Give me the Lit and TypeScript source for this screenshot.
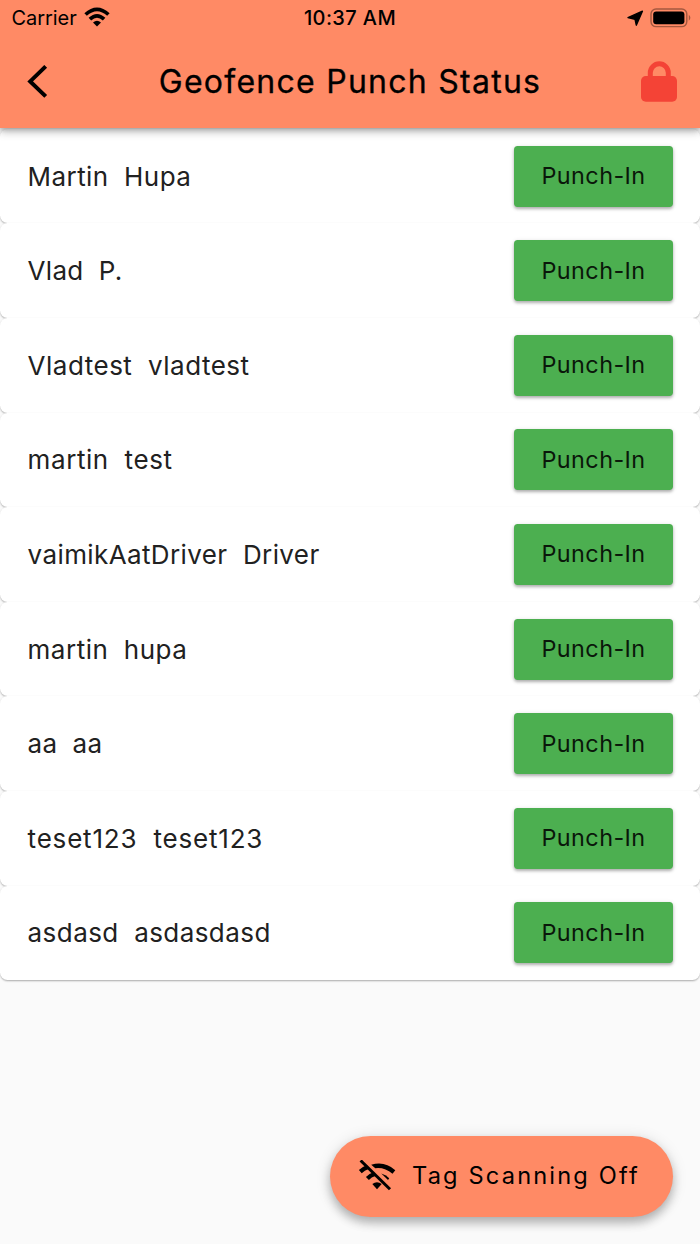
import { LitElement, html, css } from "lit";
import { customElement, property } from "lit/decorators.js";

interface Person {
  name: string;
  tracking: number;
}

const PEOPLE: Person[] = [
  { name: "Martin  Hupa", tracking: 0.43 },
  { name: "Vlad  P.", tracking: 0.3 },
  { name: "Vladtest  vladtest", tracking: 0.5 },
  { name: "martin  test", tracking: 0.58 },
  { name: "vaimikAatDriver  Driver", tracking: 0.39 },
  { name: "martin  hupa", tracking: 0.49 },
  { name: "aa  aa", tracking: 0.3 },
  { name: "teset123  teset123", tracking: 0.8 },
  { name: "asdasd  asdasdasd", tracking: 0.43 },
];

@customElement("punch-row")
class PunchRow extends LitElement {
  @property() name = "";
  @property({ type: Number }) tracking = 0;

  static styles = css`
    :host {
      display: flex;
      align-items: center;
      justify-content: space-between;
      box-sizing: border-box;
      height: 94.6px;
      padding: 0 27px 0 27.6px;
      background: #fff;
      border-radius: 7.5px;
      box-shadow: 0 1px 2px rgba(0, 0, 0, 0.24), 0 2px 2px -1px rgba(0, 0, 0, 0.1);
    }
    .name {
      padding-top: 1.2px;
      font-size: 26px;
      line-height: 32px;
      white-space: pre;
      color: #212121;
    }
    .punch {
      box-sizing: border-box;
      width: 159px;
      height: 61px;
      padding: 0;
      border: 0;
      border-radius: 3.7px;
      background: #4caf50;
      color: #0a170a;
      font: 400 23.4px/60px Inter, sans-serif;
      letter-spacing: 0.45px;
      box-shadow: 0 2px 3px rgba(0, 0, 0, 0.25), 0 1px 5px rgba(0, 0, 0, 0.12);
    }
  `;

  render() {
    return html`
      <span class="name" style="letter-spacing:${this.tracking}px">${this.name}</span>
      <button class="punch">Punch-In</button>
    `;
  }
}

@customElement("app-root")
class AppRoot extends LitElement {
  static styles = css`
    :host {
      display: flex;
      flex-direction: column;
      position: relative;
      width: 700px;
      height: 1244px;
      overflow: hidden;
      background: #fafafa;
      font-family: Inter, "Liberation Sans", sans-serif;
      color: #000;
    }
    svg { display: block; flex: none; }
    .top {
      position: relative;
      z-index: 1;
      height: 128.4px;
      margin-bottom: 0.4px;
      flex: none;
      background: #ff8a65;
      box-shadow: 0 4px 8px rgba(0, 0, 0, 0.26), 0 2px 4px rgba(0, 0, 0, 0.14);
    }
    .status {
      display: grid;
      grid-template-columns: 1fr auto 1fr;
      align-items: center;
      height: 36px;
      padding: 0 11.5px;
      font-size: 20px;
      line-height: 24px;
    }
    .left, .right { display: flex; align-items: center; }
    .left { gap: 7px; }
    .right { justify-content: flex-end; gap: 6px; margin-right: -3.5px; }
    .carrier { letter-spacing: -0.05px; }
    .time { font-weight: 500; letter-spacing: 0.4px; }
    .wifi { margin-bottom: 2px; }
    .bar {
      display: grid;
      grid-template-columns: 100px 1fr 100px;
      align-items: center;
      height: 92px;
    }
    .back { margin-left: 24.5px; }
    .lock { margin-left: 41px; }
    .title {
      margin: 0;
      text-align: center;
      font-size: 32px;
      line-height: 40px;
      font-weight: 400;
      letter-spacing: 1.26px;
      -webkit-text-stroke: 0.3px #000;
      white-space: nowrap;
    }
    .list { display: flex; flex-direction: column; }
    .fab {
      position: absolute;
      right: 27px;
      bottom: 27px;
      display: flex;
      align-items: center;
      gap: 16px;
      box-sizing: border-box;
      width: 343px;
      height: 81.5px;
      padding: 0 0 0 28px;
      border: 0;
      border-radius: 41px;
      background: #ff8a65;
      color: #000;
      font: 400 23.6px/30px Inter, sans-serif;
      letter-spacing: 2.17px;
      white-space: nowrap;
      box-shadow: 0 6px 10px rgba(0, 0, 0, 0.24), 0 2px 16px rgba(0, 0, 0, 0.12);
    }
  `;

  render() {
    return html`
      <header class="top">
        <div class="status">
          <div class="left">
            <span class="carrier">Carrier</span>
            <svg class="wifi" width="26" height="20" viewBox="0 0 26 20">
              <g fill="none" stroke="#000" stroke-width="3.7">
                <path d="M1.6 7.5Q13-2.8 24.4 7.5" />
                <path d="M5.9 12.2Q13 5.6 20.1 12.2" />
              </g>
              <path d="M9 15.4Q13 12 17 15.4L13 19.4Z" />
            </svg>
          </div>
          <div class="time">10:37 AM</div>
          <div class="right">
            <svg width="17" height="17" viewBox="0 0 17 17">
              <path d="M15.4 1.2 9.3 15.2 8 9.2 1 7.6Z" stroke="#000" stroke-width="1.4" stroke-linejoin="round" />
            </svg>
            <svg width="42" height="20" viewBox="0 0 42 20">
              <rect x="1" y="1" width="35.8" height="17.6" rx="5" fill="none" stroke="#a4583f" stroke-width="1.4" />
              <rect x="3.2" y="3.4" width="31.2" height="12.8" rx="3" />
              <path d="M38.8 6.8Q42 9.8 38.8 12.8Z" fill="#a4583f" />
            </svg>
          </div>
        </div>
        <div class="bar">
          <svg class="back" width="24" height="34" viewBox="0 0 24 34">
            <path d="M20.7 1.4 5.2 16.4 20.7 31.4" fill="none" stroke="#000" stroke-width="4" />
          </svg>
          <h1 class="title">Geofence Punch Status</h1>
          <svg class="lock" width="36" height="42" viewBox="0 0 36 42">
            <path d="M9.3 18V11.8a9 9 0 0 1 18 0V18" fill="none" stroke="#f44336" stroke-width="5" />
            <rect y="15" width="36" height="25.7" rx="4.8" fill="#f44336" />
          </svg>
        </div>
      </header>
      <main class="list">
        ${PEOPLE.map((p) => html`<punch-row .name=${p.name} .tracking=${p.tracking}></punch-row>`)}
      </main>
      <button class="fab">
        <svg width="38" height="32" viewBox="0 0 38 32">
          <g fill="none" stroke="#000">
            <path d="M2.3 11.6Q5.6 8.6 9.8 7" stroke-width="4.2" />
            <path d="M9.4 18.4Q12.4 15.4 16.6 14" stroke-width="4.2" />
            <path d="M2.6.5 32 29.3" stroke-width="3" />
          </g>
          <path d="M13.2 4.8Q26.5.6 37.3 10.2L34.5 13.7Q26.5 7 17.3 8.2Z" />
          <path d="M23.3 13.4Q28.6 14.8 31.2 18.3L30 20Z" />
          <path d="M14.3 24Q19 20.6 23.7 24L19 29.3Z" />
        </svg>
        <span class="label">Tag Scanning Off</span>
      </button>
    `;
  }
}
